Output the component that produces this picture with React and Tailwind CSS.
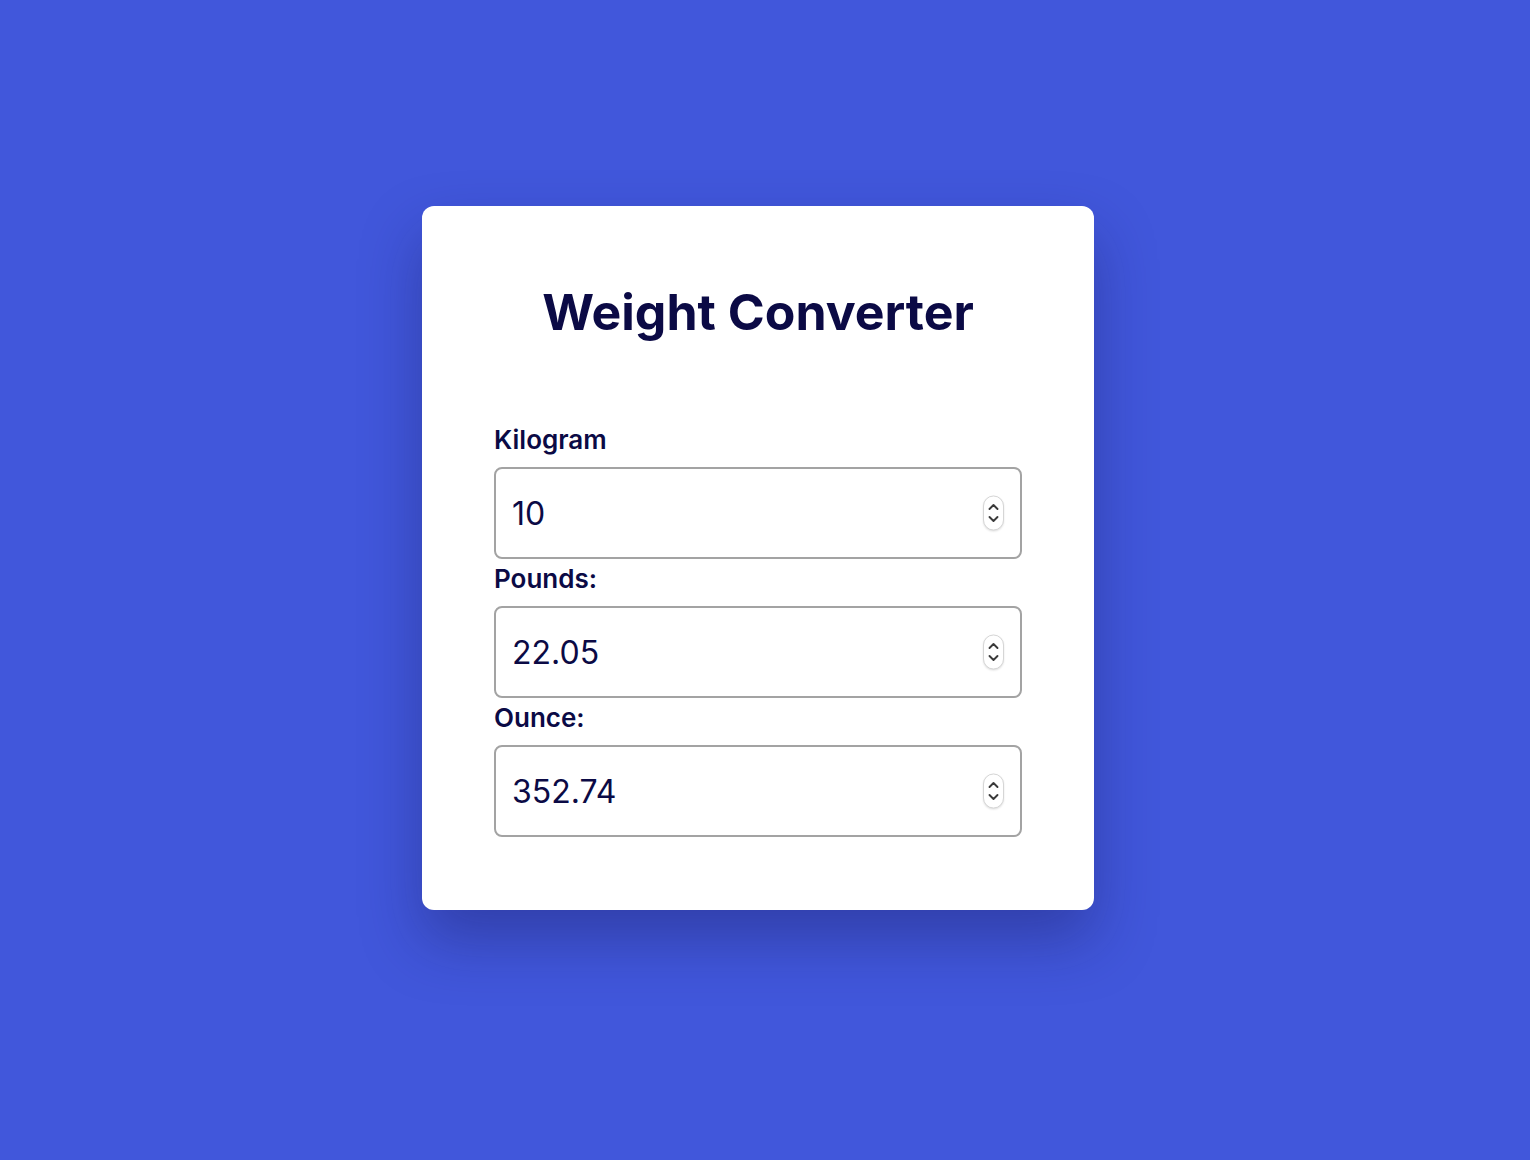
import { useState } from 'react'

function Spinner() {
  return (
    <span className="pointer-events-none absolute right-[18px] top-1/2 -translate-y-1/2 flex h-[35px] w-[21px] flex-col items-center justify-center gap-[5px] rounded-full border border-[#d6d6d6] bg-white shadow-[0_1px_2px_rgba(0,0,0,0.12)]">
      <svg width="11" height="7" viewBox="0 0 11 7" fill="none" stroke="#3a3a3a" strokeWidth="1.9" strokeLinecap="round" strokeLinejoin="round">
        <path d="M1.5 5.5L5.5 1.5l4 4" />
      </svg>
      <svg width="11" height="7" viewBox="0 0 11 7" fill="none" stroke="#3a3a3a" strokeWidth="1.9" strokeLinecap="round" strokeLinejoin="round">
        <path d="M1.5 1.5L5.5 5.5l4-4" />
      </svg>
    </span>
  )
}

function Field({ label, value, onChange }) {
  return (
    <div className="flex flex-col">
      <label className="text-[26px] leading-[39px] font-semibold text-[#0b0a45] mb-[8px]">{label}</label>
      <div className="relative">
        <input
          type="number"
          value={value}
          onChange={onChange}
          className="h-[92px] w-full rounded-[8px] border-2 border-[#a3a3a3] bg-white px-[16px] text-[32px] text-[#0b0a45] outline-none [appearance:textfield] [&::-webkit-inner-spin-button]:appearance-none [&::-webkit-outer-spin-button]:appearance-none"
        />
        <Spinner />
      </div>
    </div>
  )
}

export default function App() {
  const [kg, setKg] = useState('10')
  const n = parseFloat(kg)
  const lb = isNaN(n) ? '' : (n * 2.20462).toFixed(2)
  const oz = isNaN(n) ? '' : (n * 35.274).toFixed(2)

  return (
    <div
      className="min-h-[1160px] bg-[#4157db] flex items-center justify-center pr-[14px] pb-[44px]"
      style={{ fontFamily: 'Inter, "Noto Sans", sans-serif' }}
    >
      <div className="w-[672px] bg-white rounded-[12px] px-[72px] pt-[74px] pb-[73px] shadow-[0_30px_60px_rgba(20,20,80,0.35)]">
        <h1 className="text-center text-[50px] leading-[64px] font-bold text-[#0b0a45] mb-[76px]">Weight Converter</h1>
        <div className="flex flex-col">
          <Field label="Kilogram" value={kg} onChange={(e) => setKg(e.target.value)} />
          <Field label="Pounds:" value={lb} onChange={() => {}} />
          <Field label="Ounce:" value={oz} onChange={() => {}} />
        </div>
      </div>
    </div>
  )
}
